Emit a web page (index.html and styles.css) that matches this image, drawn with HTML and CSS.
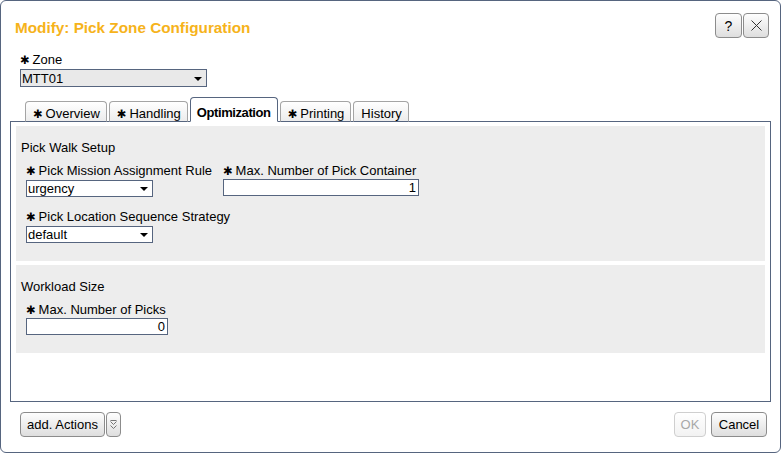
FILE: index.html
```html
<!DOCTYPE html>
<html>
<head>
<meta charset="utf-8">
<link rel="stylesheet" href="styles.css">
</head>
<body>
<div class="dialog">
  <div class="header">
    <div class="title">Modify: Pick Zone Configuration</div>
    <div class="hbtns">
      <button class="btn hbtn">?</button>
      <button class="btn hbtn"><svg width="11" height="11" viewBox="0 0 11 11"><path d="M0.5 0.5 L10.5 10.5 M10.5 0.5 L0.5 10.5" stroke="#333" stroke-width="1" fill="none"/></svg></button>
    </div>
  </div>
  <div class="zone">
    <div class="lbl"><span class="req">✱</span> Zone</div>
    <div class="sel sel-zone"><span>MTT01</span><i class="arrow"></i></div>
  </div>
  <div class="tabs">
    <div class="tab"><span class="req">✱</span> Overview</div>
    <div class="tab"><span class="req">✱</span> Handling</div>
    <div class="tab active">Optimization</div>
    <div class="tab"><span class="req">✱</span> Printing</div>
    <div class="tab">History</div>
  </div>
  <div class="panel">
    <div class="section s1">
      <div class="stitle">Pick Walk Setup</div>
      <div class="row">
        <div class="field f1">
          <div class="lbl"><span class="req">✱</span> Pick Mission Assignment Rule</div>
          <div class="sel sel-s"><span>urgency</span><i class="arrow"></i></div>
        </div>
        <div class="field">
          <div class="lbl"><span class="req">✱</span> Max. Number of Pick Container</div>
          <div class="inp inp-l">1</div>
        </div>
      </div>
      <div class="row row2">
        <div class="field">
          <div class="lbl"><span class="req">✱</span> Pick Location Sequence Strategy</div>
          <div class="sel sel-s"><span>default</span><i class="arrow"></i></div>
        </div>
      </div>
    </div>
    <div class="section s2">
      <div class="stitle">Workload Size</div>
      <div class="row">
        <div class="field">
          <div class="lbl"><span class="req">✱</span> Max. Number of Picks</div>
          <div class="inp inp-m">0</div>
        </div>
      </div>
    </div>
  </div>
  <div class="footer">
    <div class="fleft">
      <button class="btn fbtn b-actions">add. Actions</button>
      <button class="btn fbtn b-more"><svg width="7" height="10" viewBox="0 0 7 10"><path d="M0.5 0.5 H6.5 M0.5 1.5 L3.5 4.5 L6.5 1.5 M0.5 5.5 L3.5 8.5 L6.5 5.5" stroke="#777" stroke-width="1" fill="none"/></svg></button>
    </div>
    <div class="fright">
      <button class="btn fbtn b-ok" disabled>OK</button>
      <button class="btn fbtn b-cancel">Cancel</button>
    </div>
  </div>
</div>
</body>
</html>
```
FILE: styles.css
```css
* { box-sizing: border-box; }
html, body { margin: 0; padding: 0; background: #fff; }
body {
  font-family: "Liberation Sans", Arial, sans-serif;
  font-size: 13px;
  color: #000;
  width: 781px;
  height: 453px;
  overflow: hidden;
}
.dialog {
  width: 781px;
  height: 453px;
  border: 1px solid #56657f;
  border-radius: 6px;
  display: flex;
  flex-direction: column;
  background: #fff;
}
.header {
  display: flex;
  justify-content: space-between;
  align-items: flex-start;
  padding: 12px 11px 0 14px;
  height: 37px;
  flex: none;
}
.title {
  font-weight: bold;
  font-size: 15.3px;
  line-height: 18px;
  color: #f6b31b;
  margin-top: 6px;
}
.hbtns { display: flex; gap: 1px; }
.btn {
  font-family: "Liberation Sans", Arial, sans-serif;
  font-size: 13px;
  color: #000;
  border: 1px solid #8c8c8c;
  border-radius: 4px;
  background: linear-gradient(#fefefe, #dedede);
  padding: 0;
  height: 25px;
  display: flex;
  align-items: center;
  justify-content: center;
}
.hbtn { width: 27px; font-size: 14px; }
.hbtn:last-child { width: 26px; }
.req {
  font-family: "DejaVu Sans", sans-serif;
  font-size: 11.5px;
  line-height: 10px;
  display: inline-block;
  width: 9px;
  vertical-align: 0;
}
.lbl { line-height: 15px; height: 15px; white-space: nowrap; }
.zone { margin: 14px 0 0 19px; flex: none; }
.sel {
  margin-top: 2px;
  height: 17px;
  border: 1px solid #56657f;
  background: #fff;
  display: flex;
  align-items: center;
  justify-content: space-between;
  padding: 0 4px 0 1px;
  line-height: 15px;
}
.sel-zone { width: 187px; height: 18px; background: #e9e9e9; }
.sel-s { width: 127px; }
.arrow {
  width: 0; height: 0;
  border-left: 4px solid transparent;
  border-right: 4px solid transparent;
  border-top: 4px solid #000;
  margin-top: 1px;
}
.tabs {
  display: flex;
  align-items: flex-end;
  gap: 2px;
  margin: 10px 0 -1px 24px;
  height: 25px;
  position: relative;
  z-index: 1;
  flex: none;
}
.tab {
  height: 21px;
  padding: 4px 6px 0 7px;
  line-height: 15px;
  border: 1px solid #a4a4a4;
  border-bottom-color: #56657f;
  border-radius: 4px 4px 0 0;
  background: linear-gradient(#ffffff, #ececec);
  white-space: nowrap;
}
.tab.active {
  height: 25px;
  padding: 7px 6px 0 6px;
  font-weight: bold;
  letter-spacing: -0.4px;
  background: #fff;
  border-color: #56657f;
  border-bottom-color: #fff;
}
.panel {
  margin: 0 9px;
  height: 281px;
  flex: none;
  border: 1px solid #56657f;
  padding: 4px 5px;
  display: flex;
  flex-direction: column;
  gap: 4px;
}
.section {
  background: #ededed;
  padding: 14px 5px 0 5px;
  flex: none;
}
.s1 { height: 135px; }
.s2 { height: 88px; }
.stitle { line-height: 15px; height: 15px; }
.row {
  display: flex;
  margin: 8px 0 0 5px;
}
.row2 { margin-top: 12px; }
.f1 { width: 197px; }
.inp {
  margin-top: 1px;
  height: 17px;
  border: 1px solid #56657f;
  background: #fff;
  text-align: right;
  padding: 0 2px;
  line-height: 15px;
}
.inp-l { width: 196px; }
.inp-m { width: 142px; }
.footer {
  display: flex;
  justify-content: space-between;
  padding: 10px 13px 0 19px;
  flex: none;
}
.fleft, .fright { display: flex; }
.fleft { gap: 1px; }
.fright { gap: 5px; }
.b-actions { width: 85px; }
.b-more { width: 15px; }
.b-ok { width: 32px; color: #a8a8a8; border-color: #cfcfcf; background: linear-gradient(#ffffff, #f2f2f2); }
.b-cancel { width: 56px; }
```
